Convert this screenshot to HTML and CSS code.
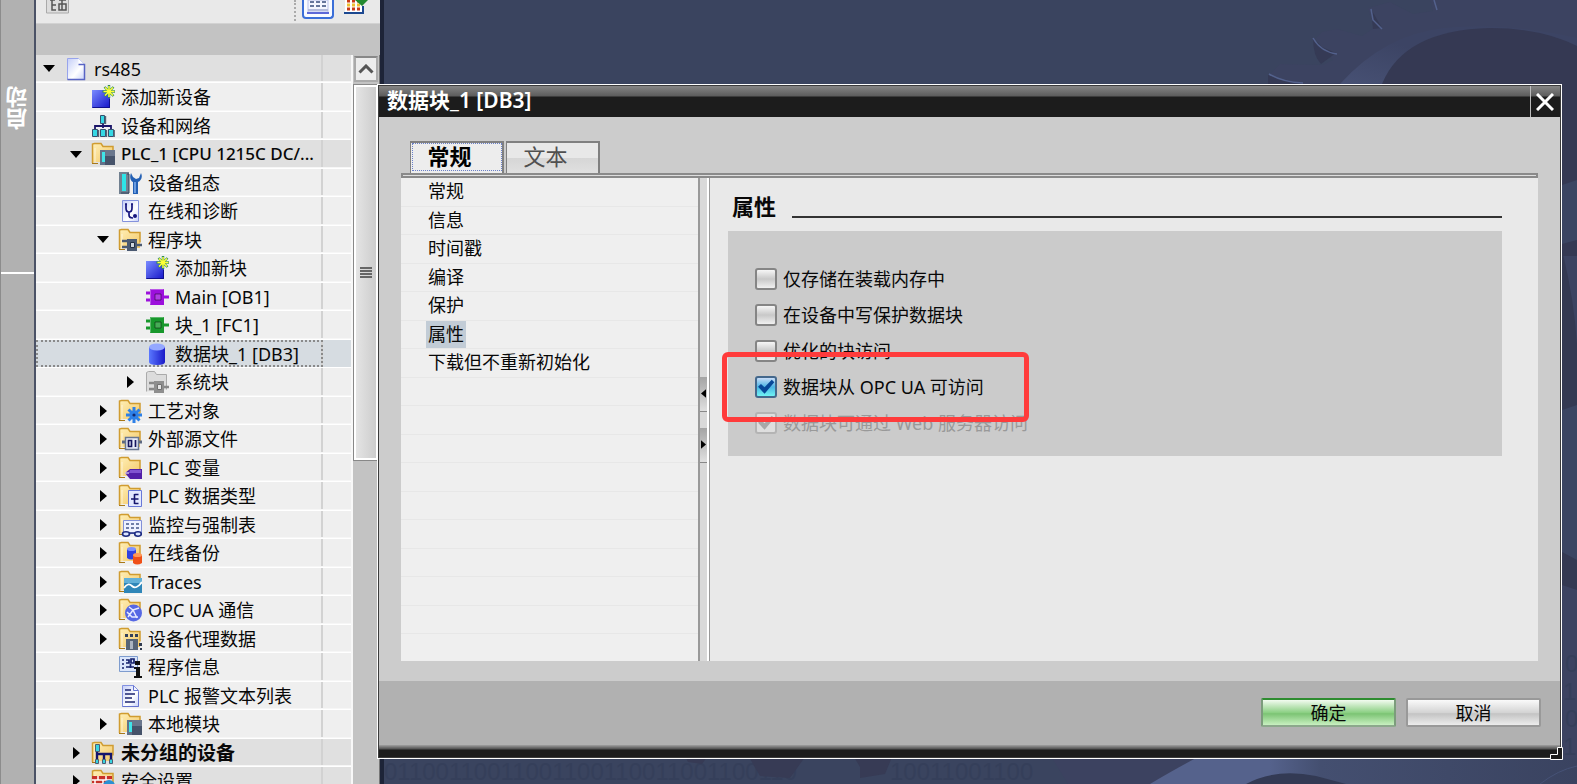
FILE: index.html
```html
<!DOCTYPE html>
<html lang="zh-CN">
<head>
<meta charset="utf-8">
<title>数据块_1 [DB3]</title>
<link rel="stylesheet" href="styles.css">
</head>
<body>
<svg class="defs" aria-hidden="true">
  <defs>
    <linearGradient id="gBlue" x1="0" y1="0" x2="1" y2="1"><stop offset="0" stop-color="#7a8cff"/><stop offset="1" stop-color="#1414c8"/></linearGradient>
    <linearGradient id="gFolder" x1="0" y1="0" x2="1" y2="1"><stop offset="0" stop-color="#fff0b8"/><stop offset="1" stop-color="#f3c766"/></linearGradient>
    <linearGradient id="gPaper" x1="0" y1="0" x2="1" y2="1"><stop offset="0" stop-color="#c4cef8"/><stop offset=".6" stop-color="#fff"/><stop offset="1" stop-color="#c8d2fa"/></linearGradient>
    <linearGradient id="gCyl" x1="0" x2="1"><stop offset="0" stop-color="#5a78ff"/><stop offset="1" stop-color="#1a1ac8"/></linearGradient>
    <symbol id="folder" viewBox="0 0 24 24"><path d="M1 21V2l2-1h7l2 3h10v16H4z" fill="url(#gFolder)"/><path d="M1.500 21V2l2-.5h6.500l2 3h10v10" fill="none" stroke="#d09c30" stroke-width="1.500"/><path d="M4 20V6" stroke="#fff" opacity=".6"/><path d="M1 21.500h6" stroke="#a87818"/></symbol>
    <symbol id="project" viewBox="0 0 24 24"><path d="M3.500 1.500h11l6 6v15h-17z" fill="url(#gPaper)" stroke="#98a4ec"/><path d="M14.500 1.500l6 6h-6z" fill="#fff"/><path d="M14.500 7.500h6v15h-17" fill="none" stroke="#5864c4" stroke-width="1.500"/></symbol>
    <symbol id="star" viewBox="0 0 24 24"><rect x="1" y="5" width="18" height="18" fill="url(#gBlue)"/><path d="M1.500 22.500h17V14" fill="none" stroke="#10108c"/><path d="M18 0v13M11.500 6.500h13M13.500 2l9 9M22.500 2l-9 9" stroke="#2c8a5a" stroke-width="2.400"/><path d="M18 1v11M12.500 6.500h11M14 2.500l8 8M22 2.500l-8 8" stroke="#ffff38" stroke-width="1.500"/></symbol>
    <symbol id="network" viewBox="0 0 24 24"><path d="M12 9v5M4 16v-4h16v4" fill="none" stroke="#1b1468" stroke-width="1.800"/><g fill="#36d8e4" stroke="#36506c"><path d="M9.500 1.500h4v8h-4zM1.500 15.500h5v7h-5zM9.500 15.500h5v7h-5zM17.500 15.500h5v7h-5z"/></g><path d="M14.500 2v8M7.500 16v7M15.500 16v7M23.200 16v7" stroke="#566474" stroke-width="1.400"/></symbol>
    <symbol id="plc" viewBox="0 0 24 24"><use href="#folder"/><path d="M9 8h5v15H9z" fill="#62728a"/><path d="M11 10h3v10h-3z" fill="#40e4e8"/><path d="M14 8h10v15H14z" fill="#46536a"/><path d="M14 8h10v6H14z" fill="#69768c"/></symbol>
    <symbol id="config" viewBox="0 0 24 24"><path d="M1 1h10v22H1z" fill="#718090"/><path d="M4 3h4v17H4z" fill="#2ee4e8"/><path d="M9 3h2v19H3" fill="none" stroke="#34465e"/><path d="M13 2c-2 5 0 8 2 9v12h5V11c3-1 5-5 3-9l-2 5-3 1-3-2z" fill="#2360b4"/><path d="M16 11h2v11h-2z" fill="#6a9ce0"/></symbol>
    <symbol id="diag" viewBox="0 0 24 24"><path d="M4.500 1.500h16v21h-16z" fill="url(#gPaper)" stroke="#8492dc"/><path d="M8 5v4q0 4 3 4t3-4V5M11 13v3q0 3 4 3M7 5h2M13 5h2" fill="none" stroke="#15157c" stroke-width="1.700"/><circle cx="17" cy="17" r="2" fill="#15157c"/></symbol>
    <symbol id="chip" viewBox="0 0 24 24"><path d="M1 8h5M1 15h5M18 12h6" stroke="currentColor" stroke-width="3"/><path d="M5 4h14v16H5z" fill="currentColor"/><path d="M10 9h6v6h-6z" fill="#fff" fill-opacity=".2" stroke="#000" stroke-opacity=".45"/><path d="M5.500 19.500V4.500h13" fill="none" stroke="#fff" stroke-opacity=".3"/></symbol>
    <symbol id="blocks" viewBox="0 0 24 24"><use href="#folder"/><path d="M4 13h5M4 19h5M18 17h6" stroke="#4b5a72" stroke-width="2.500"/><path d="M9 11h10v12H9z" fill="#4b5a72"/><path d="M12.500 14.500h4v5h-4z" fill="#cfd6de" stroke="#222e42"/></symbol>
    <symbol id="sysblocks" viewBox="0 0 24 24"><path d="M1.500 21.500V2.500l2-1h6l2 3h10v15" fill="#dcdcdc" stroke="#aaa"/><path d="M4 13h5M4 19h5M18 17h6" stroke="#888" stroke-width="2.500"/><path d="M9 11h10v12H9z" fill="#8e8e8e"/><path d="M12.500 14.500h4v5h-4z" fill="#e4e4e4" stroke="#707070"/></symbol>
    <symbol id="db" viewBox="0 0 24 24"><path d="M4 5v15q0 3 8 3t8-3V5z" fill="url(#gCyl)"/><ellipse cx="12" cy="5" rx="8" ry="3.500" fill="#94a8ff"/></symbol>
    <symbol id="tech" viewBox="0 0 24 24"><use href="#folder"/><path d="M16 8v16M8 16h16M10.500 10.500l11 11M21.500 10.500l-11 11" stroke="#2d80e8" stroke-width="3"/><circle cx="16" cy="16" r="4.500" fill="#2d80e8"/><circle cx="16" cy="16" r="1.600" fill="#12286e"/></symbol>
    <symbol id="source" viewBox="0 0 24 24"><use href="#folder"/><path d="M4 15h20" stroke="#5c6880" stroke-width="3"/><path d="M7.500 10.500h13v12h-13z" fill="#e8ecf8" stroke="#687690" stroke-width="1.500"/><path d="M10.500 13.500h3v6h-3zM17.500 13v7" fill="none" stroke="#16165e" stroke-width="1.700"/></symbol>
    <symbol id="tags" viewBox="0 0 24 24"><use href="#folder"/><path d="M7 17l5-4h12v10H12z" fill="#5220a8"/><path d="M12 14h11v3H11z" fill="#8054d0"/><path d="M7 17h4" stroke="#fff"/></symbol>
    <symbol id="types" viewBox="0 0 24 24"><use href="#folder"/><path d="M10.500 6.500h13v16h-13z" fill="#e4e9ff" stroke="#6878d8"/><path d="M13 15h3M16.500 10v10M16.500 10.500h4M16.500 15h4M16.500 19.500h4" stroke="#15156c" stroke-width="1.600"/></symbol>
    <symbol id="watch" viewBox="0 0 24 24"><use href="#folder"/><path d="M5.500 7.500h18v13h-18z" fill="#eef1ff" stroke="#8290d8"/><path d="M8 11h13M8 15h13" stroke="#707ea8" stroke-width="2" stroke-dasharray="3 2"/><path d="M11 20h8" stroke="#1c2a80" stroke-width="1.500"/><ellipse cx="8" cy="21" rx="3.500" ry="2.200" fill="#dbe4ff" stroke="#1c2a80" stroke-width="1.600"/><ellipse cx="20" cy="21" rx="3.300" ry="2.200" fill="#dbe4ff" stroke="#1c2a80" stroke-width="1.600"/></symbol>
    <symbol id="backup" viewBox="0 0 24 24"><use href="#folder"/><path d="M9 8v9q4 3 9 0V8z" fill="#3042e0"/><ellipse cx="13.500" cy="8" rx="4.500" ry="2" fill="#7c90ff"/><path d="M15 14v8q4 3 9 0v-8z" fill="#f05018"/><ellipse cx="19.500" cy="14" rx="4.500" ry="2" fill="#ff9858"/></symbol>
    <symbol id="traces" viewBox="0 0 24 24"><use href="#folder"/><path d="M6 8h18v15H6z" fill="#2f86b8"/><path d="M6 8h18v5H6z" fill="#62b0d8"/><path d="M6 18q4-6 8-2t10-4" fill="none" stroke="#fff" stroke-width="1.800"/></symbol>
    <symbol id="opc" viewBox="0 0 24 24"><use href="#folder"/><circle cx="15.500" cy="15" r="8.500" fill="#5668e4"/><path d="M11 9l4 3 6-2M15 12l-5 7M15 12l4 8M9 14l5 5h6" fill="none" stroke="#e6eaff" stroke-width="1.500"/></symbol>
    <symbol id="proxy" viewBox="0 0 24 24"><use href="#folder"/><path d="M7 7h3v3H7zM12 7h3v3h-3zM17 7h3v3h-3z" fill="#33405a"/><path d="M8 12h12v11H8z" fill="#566476"/><path d="M12 14h3v8h-3z" fill="#aab4c0"/><path d="M21 16h3v3h-3zM22 21h2v2h-2z" fill="#2e3a50"/></symbol>
    <symbol id="proginfo" viewBox="0 0 24 24"><path d="M1.500 1.500h18v15h-18z" fill="#dbe6fb" stroke="#7e9cce"/><path d="M4 5h2M4 9h2M4 13h2M8 5h3v3H8M8 12h8M12.500 9v4M13 4h3v4h-3z" fill="none" stroke="#14206c" stroke-width="1.700"/><path d="M17 6h5v4h-5zM16 12h6v9h2v2h-8v-2h2v-7h-2z" fill="#101010"/></symbol>
    <symbol id="textlist" viewBox="0 0 24 24"><path d="M4.500 1.500h11l5 5v16h-16z" fill="url(#gPaper)" stroke="#8290e0"/><path d="M15.500 1.500v5h5M20.500 8v14.500h-16" fill="none" stroke="#6674d0"/><path d="M7 6h6M7 10h10M7 14h7M7 18h10" stroke="#1c2470" stroke-width="1.700"/></symbol>
    <symbol id="ungrouped" viewBox="0 0 24 24"><use href="#folder"/><path d="M6 4v9h14v5M6 13v5M13 13v5" fill="none" stroke="#15156c" stroke-width="2.400"/><path d="M4.500 3.500h4v7h-4zM4.500 18.500h3v4h-3zM11.500 18.500h3v4h-3zM18.500 18.500h3v4h-3z" fill="#38d4e0" stroke="#4a5e74"/></symbol>
    <symbol id="security" viewBox="0 0 24 24"><use href="#folder"/><path d="M1 7h20v17H1z" fill="#c83028"/><path d="M1 11h20M1 15h20M7 7v4M15 7v4M4 11v4M12 11v4" stroke="#fff" stroke-width="1.500"/><circle cx="18" cy="17" r="6" fill="#2a90d4"/></symbol>
  </defs>
</svg>

<svg class="wallpaper" viewBox="0 0 1577 784" preserveAspectRatio="xMaxYMid slice" aria-hidden="true">
  <defs>
    <linearGradient id="wg" x1="0" x2="1"><stop offset="0" stop-color="#55628c"/><stop offset=".28" stop-color="#55628c"/><stop offset=".4" stop-color="#444f70"/><stop offset="1" stop-color="#3a4360"/></linearGradient>
    <linearGradient id="wr" x1="0" y1="1" x2="1" y2="0"><stop offset="0" stop-color="#4a5478"/><stop offset=".5" stop-color="#3c4464"/></linearGradient>
  </defs>
  <path d="M0 0h1577v784H0z" fill="#3a445f"/>
  <path d="M1268 84l2-10 10-10 43 1 10-5-18-21 7-7 15-3 25 7 12-8-6-20 22-6 23 12 20-3-5-21h171v784h-40V120z" fill="#3c4361"/>
  <path d="M1313 38q0 18 8 26l15-11-14-6zM1268 75v9h34zM1371 9l2 20 9-1z" fill="#353a55"/>
  <path d="M1340 84q45-50 105-56t132 10v60h-237z" fill="url(#wr)"/>
  <path d="M1382 84q22-54 108-56 52 0 87 18v210h-40z" fill="#353953"/>
  <path d="M1269 74q14 8 34 9M1313 38q8 14 24 16M1371 9l2 11 9 9M1434 0l3 10" fill="none" stroke="#53618c" stroke-width="1.500"/>
  <path d="M1562 185l15-5v60l-15 4zM1562 410l15-7v185l-15-12z" fill="#3b4562"/>
  <path d="M1562 250q20 80 15 155l-15 5zM1562 552l15 8v30l-15-5z" fill="#343952"/>
  <g class="digits"><text x="384" y="780">01100110011001100110011001100110</text><text x="890" y="780">10011001100</text><text x="1565" y="672">0</text><text x="1563" y="700">1</text><text x="1565" y="727">0</text><text x="1563" y="755">1</text></g>
  <path d="M682 750h30l-10 14-14-2zM745 750h65l-20 28-30-2zM850 750h40l-10 24h-16zM860 750h35l-10 24-25 4z" fill="#373b55"/>
  <path d="M1052 758h160l-62 26h-82z" fill="#3c4260"/>
  <path d="M1196 758h381v26h-427q20-12 46-26z" fill="url(#wg)"/>
  <path d="M1246 784q30-16 70-8l30 8z" fill="#333a54"/>
  <path d="M1540 784q18-14 37-18" fill="none" stroke="#465276"/>
</svg>

<main class="workspace">
  <nav class="rail"><button class="rail-tab" type="button">启动</button></nav>
  <section class="project">
    <div class="toolbar">
      <button class="tool tool-first" type="button" aria-label="折叠"><svg viewBox="0 0 24 14"><path d="M.5-2h22v15H.5z" fill="#ddd" stroke="#aaa"/><path d="M4 0h5M6 0v10h4M6 5h4M13 0h7M13 4h7v6h-7zM16 0v10" fill="none" stroke="#555" stroke-width="1.500"/></svg></button>
      <span class="tool-sep"></span>
      <button class="tool tool-on" type="button" aria-label="详细视图"><svg viewBox="0 0 24 18"><path d="M2 0h20v12H2z" fill="#f4f6ff" stroke="#b8c0e8"/><path d="M4 2h16M4 6h16" stroke="#66769c" stroke-width="2" stroke-dasharray="4 2"/><path d="M2 10h20" stroke="#b4bcdc" stroke-width="2"/><path d="M1 13h22" stroke="#5c68d8" stroke-width="2"/></svg></button>
      <button class="tool" type="button" aria-label="表格视图"><svg viewBox="0 0 24 18"><path d="M1 0h17v13H1z" fill="#fff"/><path d="M3 1h14M3 9h14" stroke="#c83a18" stroke-width="3" stroke-dasharray="3 2"/><path d="M3 5h14" stroke="#eec030" stroke-width="3" stroke-dasharray="3 2"/><path d="M0 13h19V6" fill="none" stroke="#1c4890" stroke-width="2"/><path d="M11 0h13l-6 6z" fill="#238a30"/></svg></button>
    </div>
    <div class="subbar"></div>
    <div class="tree-wrap">
      <ul class="tree">
        <li class="row l0 group"><i class="tw open"></i><svg class="ic"><use href="#project"/></svg><span>rs485</span></li>
        <li class="row l1"><i class="tw"></i><svg class="ic"><use href="#star"/></svg><span>添加新设备</span></li>
        <li class="row l1"><i class="tw"></i><svg class="ic"><use href="#network"/></svg><span>设备和网络</span></li>
        <li class="row l1 group medium"><i class="tw open"></i><svg class="ic"><use href="#plc"/></svg><span>PLC_1 [CPU 1215C DC/...</span></li>
        <li class="row l2"><i class="tw"></i><svg class="ic"><use href="#config"/></svg><span>设备组态</span></li>
        <li class="row l2"><i class="tw"></i><svg class="ic"><use href="#diag"/></svg><span>在线和诊断</span></li>
        <li class="row l2"><i class="tw open"></i><svg class="ic"><use href="#blocks"/></svg><span>程序块</span></li>
        <li class="row l3"><i class="tw"></i><svg class="ic"><use href="#star"/></svg><span>添加新块</span></li>
        <li class="row l3"><i class="tw"></i><svg class="ic purple"><use href="#chip"/></svg><span>Main [OB1]</span></li>
        <li class="row l3"><i class="tw"></i><svg class="ic green"><use href="#chip"/></svg><span>块_1 [FC1]</span></li>
        <li class="row l3 selected"><i class="tw"></i><svg class="ic"><use href="#db"/></svg><span>数据块_1 [DB3]</span></li>
        <li class="row l3"><i class="tw shut"></i><svg class="ic"><use href="#sysblocks"/></svg><span>系统块</span></li>
        <li class="row l2"><i class="tw shut"></i><svg class="ic"><use href="#tech"/></svg><span>工艺对象</span></li>
        <li class="row l2"><i class="tw shut"></i><svg class="ic"><use href="#source"/></svg><span>外部源文件</span></li>
        <li class="row l2"><i class="tw shut"></i><svg class="ic"><use href="#tags"/></svg><span>PLC 变量</span></li>
        <li class="row l2"><i class="tw shut"></i><svg class="ic"><use href="#types"/></svg><span>PLC 数据类型</span></li>
        <li class="row l2"><i class="tw shut"></i><svg class="ic"><use href="#watch"/></svg><span>监控与强制表</span></li>
        <li class="row l2"><i class="tw shut"></i><svg class="ic"><use href="#backup"/></svg><span>在线备份</span></li>
        <li class="row l2"><i class="tw shut"></i><svg class="ic"><use href="#traces"/></svg><span>Traces</span></li>
        <li class="row l2"><i class="tw shut"></i><svg class="ic"><use href="#opc"/></svg><span>OPC UA 通信</span></li>
        <li class="row l2"><i class="tw shut"></i><svg class="ic"><use href="#proxy"/></svg><span>设备代理数据</span></li>
        <li class="row l2"><i class="tw"></i><svg class="ic"><use href="#proginfo"/></svg><span>程序信息</span></li>
        <li class="row l2"><i class="tw"></i><svg class="ic"><use href="#textlist"/></svg><span>PLC 报警文本列表</span></li>
        <li class="row l2"><i class="tw shut"></i><svg class="ic"><use href="#plc"/></svg><span>本地模块</span></li>
        <li class="row l1 group bold"><i class="tw shut"></i><svg class="ic"><use href="#ungrouped"/></svg><span>未分组的设备</span></li>
        <li class="row l1 group"><i class="tw shut"></i><svg class="ic"><use href="#security"/></svg><span>安全设置</span></li>
      </ul>
      <div class="scroll">
        <button class="scroll-up" type="button" aria-label="向上滚动"><svg viewBox="0 0 16 10"><path d="M1.500 8.500L8 2l6.500 6.500" fill="none" stroke="#555" stroke-width="3"/></svg></button>
        <div class="thumb"><span class="grip"></span></div>
      </div>
    </div>
  </section>
</main>

<section class="dialog" role="dialog" aria-labelledby="dlg-title">
  <header class="titlebar">
    <h1 id="dlg-title">数据块_1 [DB3]</h1>
    <button class="close" type="button" aria-label="关闭"><svg viewBox="0 0 18 18"><path d="M1 1l16 16M17 1L1 17" stroke="#fff" stroke-width="3"/></svg></button>
  </header>
  <div class="dialog-body">
    <div class="tabs">
      <button class="tab active" type="button">常规</button>
      <button class="tab" type="button">文本</button>
    </div>
    <div class="tabline"></div>
    <div class="panes">
      <ul class="sections">
        <li><a href="#a">常规</a></li>
        <li><a href="#b">信息</a></li>
        <li><a href="#c">时间戳</a></li>
        <li><a href="#d">编译</a></li>
        <li><a href="#e">保护</a></li>
        <li><a href="#f" class="current">属性</a></li>
        <li><a href="#g">下载但不重新初始化</a></li>
      </ul>
      <div class="splitter">
        <button class="split" type="button" aria-label="向左折叠"><svg viewBox="0 0 6 10"><path d="M6 0v10L0 5z"/></svg></button>
        <button class="split" type="button" aria-label="向右展开"><svg viewBox="0 0 6 10"><path d="M0 0v10l6-5z"/></svg></button>
      </div>
      <div class="content">
        <h2 class="heading"><span>属性</span></h2>
        <div class="group-box">
          <label class="check"><input type="checkbox"><span>仅存储在装载内存中</span></label>
          <label class="check"><input type="checkbox"><span>在设备中写保护数据块</span></label>
          <label class="check"><input type="checkbox"><span>优化的块访问</span></label>
          <label class="check"><input type="checkbox" checked><span>数据块从 OPC UA 可访问</span></label>
          <label class="check"><input type="checkbox" checked disabled><span>数据块可通过 Web 服务器访问</span></label>
          <div class="marker"></div>
        </div>
      </div>
    </div>
  </div>
  <footer class="actions">
    <button class="btn ok" type="button">确定</button>
    <button class="btn" type="button">取消</button>
  </footer>
  <div class="bottom-edge"></div>
  <svg class="resize" viewBox="0 0 13 13" aria-hidden="true"><path d="M7.500.5h5v12H.5v-5h7z" fill="#1c1c1c" stroke="#fff"/></svg>
</section>
</body>
</html>
```

FILE: styles.css
```css
* { box-sizing: border-box; }
body {
  margin: 0;
  height: 100vh;
  overflow: hidden;
  position: relative;
  background: #3a445f;
  font-family: "Noto Sans", "Noto Sans CJK SC", sans-serif;
  font-size: 18px;
  line-height: 28px;
  color: #080808;
}
button { font: inherit; color: inherit; padding: 0; border: 0; background: none; }
ul { list-style: none; margin: 0; padding: 0; }
svg { display: block; flex: none; }
.defs { position: absolute; width: 0; height: 0; }
.wallpaper { position: absolute; inset: 0; width: 100%; height: 100%; }
.digits { font-family: "Liberation Sans", sans-serif; font-size: 24px; fill: #353f5a; }

.workspace { position: relative; display: flex; width: 384px; height: 100%; border-right: 4px solid #1d2438; }
.rail { width: 36px; flex: none; background: linear-gradient(#fff, #fff) 0 272px / 100% 2px no-repeat #b1b1b1; border-right: 2px solid #4b5266; border-left: 1px solid #8c8c8c; }
.rail-tab { width: 100%; height: 272px; padding-top: 56px; writing-mode: vertical-rl; transform: rotate(180deg); color: #fff; font-size: 22px; line-height: 32px; text-align: center; font-weight: 700; }

.project { flex: 1; min-width: 0; display: flex; flex-direction: column; background: #c3c3c3; }
.toolbar { display: flex; align-items: flex-start; height: 24px; padding: 0 8px 0 10px; background: #e9e9e9; border-bottom: 1px solid #d2d2d2; }
.tool { width: 32px; height: 19px; display: flex; justify-content: center; }
.tool svg { width: 24px; height: 18px; }
.tool-first { margin-right: auto; width: 24px; height: 14px; }
.tool.tool-first svg { height: 14px; }
.tool-sep { height: 21px; border-left: 2px dotted #aaa; margin-right: 6px; }
.tool-on { border: 2px solid #3a6ed8; border-top: 0; border-radius: 0 0 4px 4px; background: #f8faff; margin-right: 6px; }
.subbar { height: 31px; }

.tree-wrap { flex: 1; min-height: 0; display: flex; }
.tree { flex: 1; overflow: hidden; border-right: 2px solid #f8f8f8; }
.row { position: relative; display: flex; align-items: center; height: 28px; border-bottom: 1px solid #fff; box-shadow: inset 0 -1px #f6f6f6; white-space: nowrap; background: linear-gradient(#d2d2d2, #d2d2d2) right 28px top / 2px 100% no-repeat #efefef; }
.row:nth-child(even) { height: 29px; }
.row.group { background-color: #e0e0e0; }
.row.selected { background-color: #d6dce1; box-shadow: none; }
.row.selected::after { content: ""; position: absolute; inset: 0 28px 0 0; border: 2px dotted #8a8a8a; }
.medium { font-weight: 500; font-size: 17px; }
.bold { font-weight: 700; font-size: 19px; }
.l0 { padding-left: 1px; }
.l1 { padding-left: 28px; }
.l2 { padding-left: 55px; }
.l3 { padding-left: 82px; }
.tw { width: 24px; margin-right: 3px; flex: none; display: flex; justify-content: center; }
.tw.open::before { content: ""; border: 6px solid transparent; border-top: 7px solid #000; border-bottom: 0; }
.tw.shut::before { content: ""; border: 6px solid transparent; border-left: 7px solid #000; border-right: 0; }
.ic { width: 24px; height: 24px; margin-right: 6px; }
.purple { color: #9c10dc; }
.green { color: #18982c; }

.scroll { width: 27px; flex: none; display: flex; flex-direction: column; gap: 3px; padding: 1px 1px 0; border-right: 1px solid #777; }
.scroll-up { height: 26px; display: flex; align-items: center; justify-content: center; border: 2px solid #aaa; border-top-color: #888; background: #ececec; }
.scroll-up svg { width: 16px; height: 10px; }
.thumb { height: 375px; display: flex; align-items: center; justify-content: center; border: 2px solid #fff; outline: 1px solid #888; background: linear-gradient(90deg, #e4e4e4, #cdcdcd); }
.grip { width: 12px; height: 11px; background: repeating-linear-gradient(#666 0 2px, transparent 2px 3px); }

.dialog { position: absolute; left: 377px; right: 15px; top: 84px; bottom: 25px; display: flex; flex-direction: column; background: #ccc; border: 1px solid #fff; box-shadow: inset 0 0 0 1px #3c3c3c; padding: 1px; }
.titlebar { display: flex; height: 31px; flex: none; background: linear-gradient(#858585, #5c5c5c 10px, #1c1c1c 11px); }
.titlebar h1 { flex: 1; margin: 0; padding-left: 8px; font-size: 21px; line-height: 29px; font-weight: 600; color: #fff; }
.close { width: 30px; padding-right: 2px; display: flex; align-items: center; justify-content: center; border-left: 1px solid #bbb; }
.close svg { width: 18px; height: 18px; }

.dialog-body { flex: 1; min-height: 0; display: flex; flex-direction: column; padding: 24px 22px 20px; }
.tabs { display: flex; gap: 2px; padding-left: 9px; height: 32px; flex: none; }
.tab { width: 94px; height: 32px; padding: 0 14px 4px 0; border: 1px solid #808080; border-width: 2px 2px 0 1px; background: linear-gradient(#e8e8e8 50%, #d6d6d6 51%, #e0e0e0); color: #505050; font-size: 22px; line-height: 26px; }
.tab.active { background: #ededed; color: #000; font-weight: 700; outline: 1px dotted #6a80c8; outline-offset: -3px; }
.tabline { height: 5px; flex: none; border: 2px solid #8a8a8a; background: #ddd; }
.panes { flex: 1; min-height: 0; display: flex; background: #e9e9e9; }
.sections { width: 297px; flex: none; background: repeating-linear-gradient(#efefef 0 28px, #e7e7e7 28px 29px, #efefef 29px 56px, #e7e7e7 56px 57px); }
.sections li { height: 28px; padding-left: 25px; }
.sections li:nth-child(odd) { height: 29px; }
.sections a { display: block; width: fit-content; padding: 0 2px; color: inherit; text-decoration: none; line-height: 27px; }
.sections .current { background: #c2ccd6; }
.splitter { width: 12px; flex: none; display: flex; flex-direction: column; justify-content: center; gap: 16px; border: solid #999; border-width: 0 1px 0 2px; background: #d9d9d9; box-shadow: inset -2px 0 #fff; }
.split { width: 7px; height: 35px; display: flex; align-items: center; justify-content: center; background: linear-gradient(#a4a4a4, #e0e0e0); border-bottom: 1px solid #888; }
.split svg { width: 5px; height: 9px; }
.content { flex: 1; padding: 12px 36px 0 18px; }
.heading { display: flex; gap: 16px; margin: 0 0 9px; padding-left: 4px; font-size: 22px; line-height: 32px; font-weight: 700; }
.heading::after { content: ""; flex: 1; height: 26px; border-bottom: 2px solid #333; }
.group-box { position: relative; display: flex; flex-direction: column; padding: 30px 27px 15px; background: #cbcbcb; }
.check { display: flex; align-items: center; gap: 6px; height: 36px; }
.check input { appearance: none; margin: 0; width: 22px; height: 22px; border: 2px solid #858585; border-radius: 3px; background: linear-gradient(#f6f6f6, #c8c8c8 50%, #f0f0f0); }
.check input:checked { border-color: #44688c; background: linear-gradient(#c8dcf8, #4ab4e4 50%, #70f4f4); }
.check input:checked::after { content: ""; display: block; height: 18px; background: #084898; clip-path: polygon(6% 48%, 22% 34%, 42% 52%, 82% 10%, 96% 24%, 42% 88%); }
.check input:disabled { border-color: #b4b4b4; background: #dedede; }
.check input:disabled::after { background: #a8a8a8; }
.check input:disabled + span { color: #999; }
.marker { position: absolute; left: -6px; top: 121px; width: 307px; height: 70px; border: 5px solid #ff3b3b; border-radius: 6px; }

.actions { display: flex; justify-content: flex-end; gap: 10px; padding: 17px 19px 18px; background: #b1b1b1; }
.btn { width: 135px; height: 29px; border: 2px solid #999; border-radius: 2px; background: linear-gradient(#fafafa, #d4d4d4 50%, #c4c4c4 55%, #ececec); line-height: 24px; }
.ok { border-color: #2e8c30 #7c9c7c #8ca88c; background: linear-gradient(#f2fbf0, #8cd084 50%, #7cc474 55%, #c8f0c0); }
.bottom-edge { height: 12px; flex: none; background: linear-gradient(#a0a0a0, #505050 4px, #1c1c1c 5px); }
.resize { position: absolute; right: -2px; bottom: -2px; width: 13px; height: 13px; }
```
